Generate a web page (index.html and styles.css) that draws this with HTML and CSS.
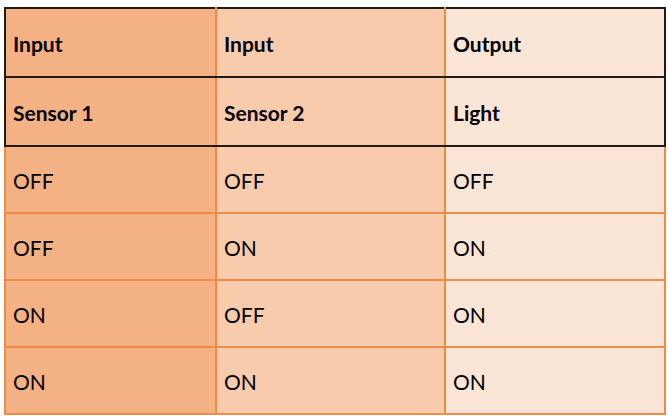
FILE: index.html
```html
<!DOCTYPE html>
<html>
<head>
<meta charset="utf-8">
<link rel="stylesheet" href="styles.css">
</head>
<body>
<table class="truth">
  <colgroup>
    <col class="c1"><col class="c2"><col class="c3">
  </colgroup>
  <thead>
    <tr class="hrow"><th class="s1">Input</th><th class="s2">Input</th><th class="s3">Output</th></tr>
    <tr class="hrow"><th class="s1">Sensor 1</th><th class="s2">Sensor 2</th><th class="s3">Light</th></tr>
  </thead>
  <tbody>
    <tr><td class="s1">OFF</td><td class="s2">OFF</td><td class="s3">OFF</td></tr>
    <tr><td class="s1">OFF</td><td class="s2">ON</td><td class="s3">ON</td></tr>
    <tr><td class="s1">ON</td><td class="s2">OFF</td><td class="s3">ON</td></tr>
    <tr><td class="s1">ON</td><td class="s2">ON</td><td class="s3">ON</td></tr>
  </tbody>
</table>
</body>
</html>
```

FILE: styles.css
```css
html, body {
  margin: 0;
  padding: 0;
  background: #ffffff;
}

.truth {
  margin: 7px 0 0 4px;
  border-collapse: collapse;
  table-layout: fixed;
  width: 660px;
  font-family: Lato, "Open Sans", sans-serif;
  font-size: 21px;
  color: #000;
}

.c1 { width: 211px; }
.c2 { width: 229px; }
.c3 { width: 220px; }

.truth th,
.truth td {
  text-align: left;
  vertical-align: middle;
  padding: 2px 0 0 7px;
  border: 2px solid #ef8a47;
}

.truth th {
  height: 65px;
  font-weight: 700;
  border-top: 2px solid #231a14;
  border-bottom: 2px solid #231a14;
}

.truth th.s1 { border-left: 2px solid #231a14; }
.truth th.s3 { border-right: 2px solid #231a14; }

.truth td {
  height: 63px;
  font-weight: 400;
}

.s1 { background: #f4b183; }
.s2 { background: #f8cbad; }
.s3 { background: #fbe5d6; }
```
